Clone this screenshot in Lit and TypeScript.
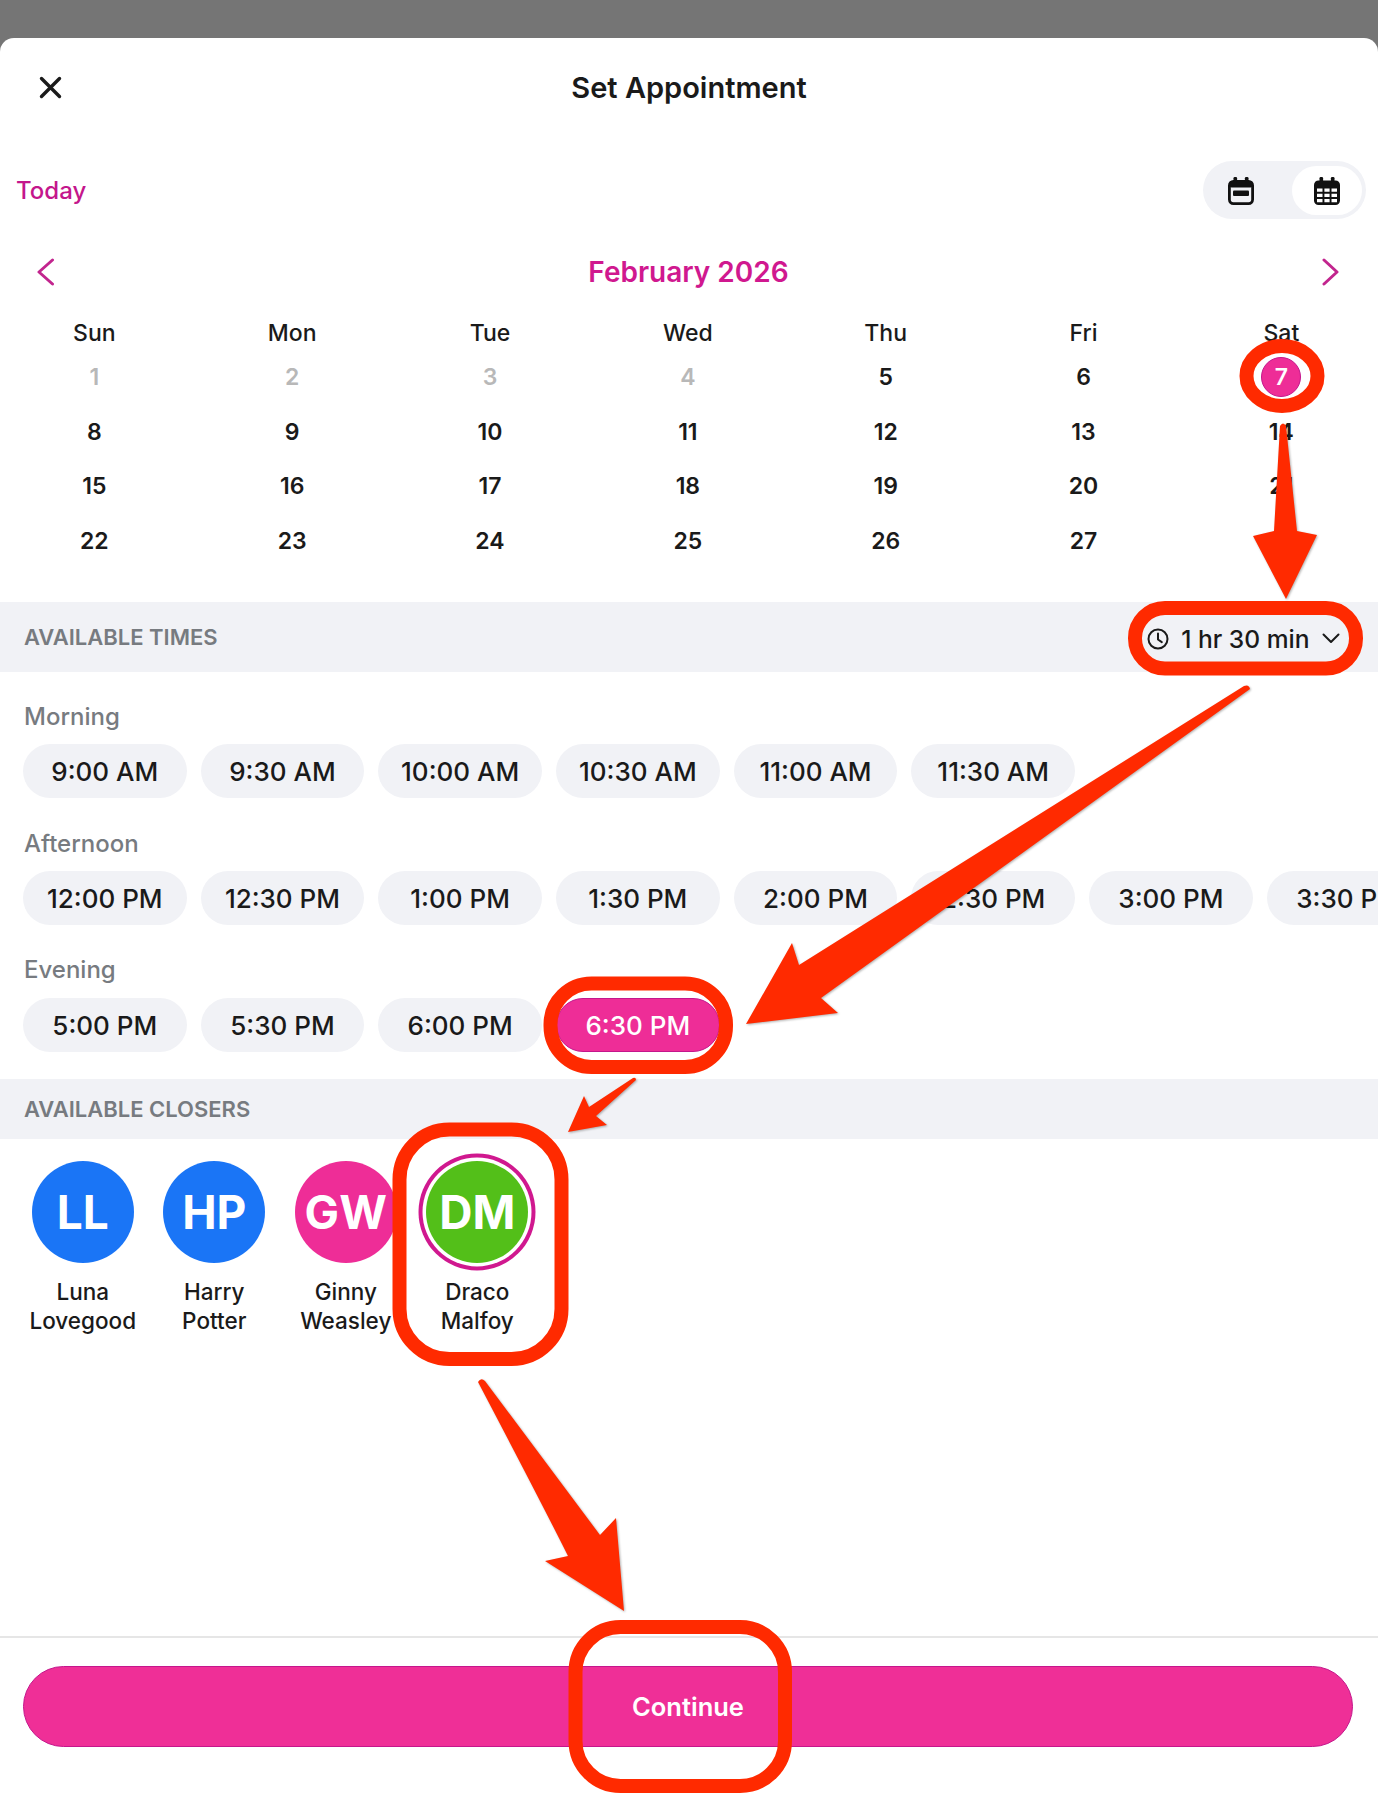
import { LitElement, html, css } from "lit";
import { customElement } from "lit/decorators.js";

const WEEKDAYS = ["Sun", "Mon", "Tue", "Wed", "Thu", "Fri", "Sat"];
const MORNING = ["9:00 AM", "9:30 AM", "10:00 AM", "10:30 AM", "11:00 AM", "11:30 AM"];
const AFTERNOON = ["12:00 PM", "12:30 PM", "1:00 PM", "1:30 PM", "2:00 PM", "2:30 PM", "3:00 PM", "3:30 PM"];
const EVENING = ["5:00 PM", "5:30 PM", "6:00 PM", "6:30 PM"];
const CLOSERS = [
  { initials: "LL", first: "Luna", last: "Lovegood", color: "blue" },
  { initials: "HP", first: "Harry", last: "Potter", color: "blue" },
  { initials: "GW", first: "Ginny", last: "Weasley", color: "pink" },
  { initials: "DM", first: "Draco", last: "Malfoy", color: "green" },
];

@customElement("app-root")
export class AppRoot extends LitElement {
  static styles = css`
    :host {
      display: block;
      position: relative;
      width: 1378px;
      height: 1802px;
      overflow: hidden;
      background: #757575;
      font-family: Inter, "Liberation Sans", sans-serif;
      color: #1a1a1a;
    }

    .sheet {
      margin-top: 38px;
      height: 1764px;
      display: flex;
      flex-direction: column;
      background: #fff;
      border-radius: 14px 14px 0 0;
    }

    .top {
      height: 98px;
      display: grid;
      grid-template-columns: 1fr auto 1fr;
      align-items: center;
    }
    .top svg {
      display: block;
      margin-left: 39px;
    }
    .title {
      font-size: 29px;
      font-weight: 600;
    }

    .toolbar {
      margin-top: 25px;
      display: flex;
      align-items: center;
      justify-content: space-between;
      padding: 0 12px 0 16px;
    }
    .today {
      padding-top: 1px;
      font-size: 24px;
      font-weight: 500;
      color: #c4168c;
    }
    .toggle {
      width: 163px;
      height: 58px;
      box-sizing: border-box;
      padding: 5px 4px 4px 0;
      display: grid;
      grid-template-columns: 1fr 70px;
      background: #f1f2f6;
      border-radius: 29px;
    }
    .toggle div {
      display: flex;
      align-items: center;
      justify-content: center;
      border-radius: 25px;
    }
    .toggle .off {
      padding-right: 14px;
    }
    .toggle .on {
      background: #fff;
    }

    .month {
      margin-top: 33px;
      height: 40px;
      display: flex;
      align-items: center;
      justify-content: space-between;
      padding: 0 39px 0 36px;
      font-size: 28px;
      font-weight: 600;
      color: #d0188f;
    }

    .calendar {
      margin: 24px 0 34px -4.6px;
      display: grid;
      grid-template-columns: repeat(7, 197.85px);
      grid-template-rows: 34px repeat(4, 54.6px);
      align-items: center;
      justify-items: center;
      font-size: 23px;
      font-weight: 600;
    }
    .weekday {
      font-weight: 500;
    }
    .muted {
      color: #b8b8b8;
    }
    .picked {
      width: 40px;
      height: 40px;
      display: flex;
      align-items: center;
      justify-content: center;
      border-radius: 50%;
      background: #ee2d97;
      color: #fff;
      box-sizing: border-box;
      border: 1px solid #c4168c;
    }

    .band {
      display: flex;
      align-items: center;
      justify-content: space-between;
      padding: 0 38.5px 0 24px;
      background: #f1f2f6;
      font-size: 22px;
      font-weight: 600;
      color: #777b80;
    }
    .band.times {
      height: 70px;
    }
    .band.closers {
      height: 60px;
      margin-top: 27px;
    }
    .duration {
      display: flex;
      align-items: center;
      padding-top: 3px;
      font-size: 24.6px;
      font-weight: 500;
      color: #1a1a1a;
    }
    .duration span {
      margin: 0 12px 0 12px;
    }

    .slots {
      margin-top: 30px;
    }
    .slots + .slots {
      margin-top: 31px;
    }
    .slots h3 {
      margin: 0 0 12px;
      padding-left: 24px;
      font-size: 24px;
      line-height: 30px;
      font-weight: 500;
      color: #777b80;
    }
    .slots.last {
      margin-top: 30px;
    }
    .slots.last h3 {
      margin-bottom: 13px;
    }
    .row {
      display: flex;
      gap: 14.2px;
      padding-left: 23px;
      overflow: hidden;
    }
    .pill {
      flex: none;
      width: 163.5px;
      height: 54px;
      box-sizing: border-box;
      padding-top: 1px;
      display: flex;
      align-items: center;
      justify-content: center;
      border-radius: 27px;
      background: #f1f2f6;
      font-size: 26px;
      font-weight: 500;
    }
    .pill.on {
      background: #ee2d97;
      border: 1.5px solid #c4168c;
      color: #fff;
    }

    .people {
      margin-top: 22px;
      padding-left: 17px;
      display: flex;
    }
    .person {
      flex: none;
      width: 131.5px;
      display: flex;
      flex-direction: column;
      align-items: center;
      font-size: 22.5px;
      line-height: 29px;
      font-weight: 500;
      text-align: center;
    }
    .avatar {
      width: 102px;
      height: 102px;
      margin-bottom: 14px;
      display: flex;
      align-items: center;
      justify-content: center;
      border-radius: 50%;
      color: #fff;
      font-size: 46px;
      font-weight: 700;
    }
    .avatar.blue {
      background: #1a75f6;
    }
    .avatar.pink {
      background: #ee2d97;
    }
    .avatar.green {
      background: #53bf19;
      box-shadow: 0 0 0 3.5px #fff, 0 0 0 7.5px #d0188f;
    }

    .footer {
      margin-top: auto;
      padding: 28px 25px 55px 23px;
      border-top: 2px solid #e6e6e6;
    }
    .continue {
      height: 81px;
      box-sizing: border-box;
      display: flex;
      align-items: center;
      justify-content: center;
      border: 1.5px solid #c4168c;
      border-radius: 41px;
      background: #ef2f97;
      color: #fff;
      font-size: 25.5px;
      font-weight: 600;
    }

    .marks {
      position: absolute;
      top: 0;
      left: 0;
      pointer-events: none;
    }
    .marks .ring {
      fill: none;
      stroke: #ff2a00;
      stroke-width: 14;
    }
    .marks .arrow {
      fill: #ff2a00;
      filter: drop-shadow(1px 1px 1px rgba(0, 0, 0, 0.3));
    }
  `;

  renderDays() {
    const cells = [];
    for (let d = 1; d <= 28; d++) {
      if (d === 7) {
        cells.push(html`<div class="picked">7</div>`);
      } else {
        cells.push(html`<div class=${d < 5 ? "muted" : ""}>${d}</div>`);
      }
    }
    return cells;
  }

  renderSlots(label: string, times: string[], picked = "", extra = "") {
    return html`
      <div class="slots ${extra}">
        <h3>${label}</h3>
        <div class="row">
          ${times.map((t) => html`<div class="pill ${t === picked ? "on" : ""}">${t}</div>`)}
        </div>
      </div>
    `;
  }

  render() {
    return html`
      <div class="sheet">
        <div class="top">
          <svg width="23" height="23" viewBox="0 0 23 23" fill="none" stroke="#1a1a1a" stroke-width="3.4" stroke-linecap="round">
            <path d="M2.5 2.5l18 18M20.5 2.5l-18 18" />
          </svg>
          <div class="title">Set Appointment</div>
        </div>

        <div class="toolbar">
          <div class="today">Today</div>
          <div class="toggle">
            <div class="off">
              <svg width="26" height="28" viewBox="0 0 26 28">
                <rect x="1.4" y="4.4" width="23.2" height="22.2" rx="4" fill="none" stroke="#111" stroke-width="2.8" />
                <rect x="1.5" y="4" width="23" height="6.5" rx="2" fill="#111" />
                <rect x="5.5" y="0" width="3.6" height="6" rx="1.2" fill="#111" />
                <rect x="16.9" y="0" width="3.6" height="6" rx="1.2" fill="#111" />
                <rect x="5" y="13.5" width="16" height="5.5" rx="1" fill="#111" />
              </svg>
            </div>
            <div class="on">
              <svg width="26" height="28" viewBox="0 0 26 28">
                <rect x="0" y="3.5" width="26" height="24.5" rx="4.5" fill="#111" />
                <rect x="5.5" y="0" width="3.6" height="6" rx="1.2" fill="#111" />
                <rect x="16.9" y="0" width="3.6" height="6" rx="1.2" fill="#111" />
                <path
                  fill="#fff"
                  d="M3 11.4h5.5v3.4H3zM10.4 11.4h5.2v3.4h-5.2zM17.5 11.4H23v3.4h-5.5zM3 16.8h5.5v3.2H3zM10.4 16.8h5.2v3.2h-5.2zM17.5 16.8H23v3.2h-5.5zM3 22h5.5v3.2H3zM10.4 22h5.2v3.2h-5.2zM17.5 22H23v3.2h-5.5z"
                />
              </svg>
            </div>
          </div>
        </div>

        <div class="month">
          <svg width="19" height="28" viewBox="0 0 19 28" fill="none" stroke="#c2258e" stroke-width="3" stroke-linecap="round" stroke-linejoin="round">
            <path d="M16.5 2L3 14l13.5 12" />
          </svg>
          <span>February 2026</span>
          <svg width="17" height="28" viewBox="0 0 17 28" fill="none" stroke="#c2258e" stroke-width="3" stroke-linecap="round" stroke-linejoin="round">
            <path d="M2 2l13 12L2 26" />
          </svg>
        </div>

        <div class="calendar">
          ${WEEKDAYS.map((d) => html`<div class="weekday">${d}</div>`)}
          ${this.renderDays()}
        </div>

        <div class="band times">
          <div>AVAILABLE TIMES</div>
          <div class="duration">
            <svg width="22" height="22" viewBox="0 0 22 22" fill="none" stroke="#1a1a1a" stroke-width="2" stroke-linecap="round" stroke-linejoin="round">
              <circle cx="11" cy="11" r="9.5" />
              <path d="M11 5.5V11.5l3.8 2.6" />
            </svg>
            <span>1 hr 30 min</span>
            <svg width="18" height="11" viewBox="0 0 18 11" fill="none" stroke="#1a1a1a" stroke-width="2" stroke-linecap="round" stroke-linejoin="round">
              <path d="M1.5 1.5L9 9l7.5-7.5" />
            </svg>
          </div>
        </div>

        ${this.renderSlots("Morning", MORNING)}
        ${this.renderSlots("Afternoon", AFTERNOON)}
        ${this.renderSlots("Evening", EVENING, "6:30 PM", "last")}

        <div class="band closers"><div>AVAILABLE CLOSERS</div></div>

        <div class="people">
          ${CLOSERS.map(
            (c) => html`
              <div class="person">
                <div class="avatar ${c.color}">${c.initials}</div>
                <div>${c.first}</div>
                <div>${c.last}</div>
              </div>
            `
          )}
        </div>

        <div class="footer">
          <div class="continue">Continue</div>
        </div>
      </div>

      <!-- red annotations drawn on top of the screenshot -->
      <svg class="marks" width="1378" height="1802" viewBox="0 0 1378 1802">
        <ellipse class="ring" cx="1282" cy="376" rx="35.5" ry="30" />
        <rect class="ring" x="1135" y="608" width="221" height="60.5" rx="30" />
        <rect class="ring" x="550.5" y="983.5" width="175.5" height="83.5" rx="41" />
        <rect class="ring" x="399.5" y="1129.5" width="162" height="229.5" rx="50" />
        <rect class="ring" x="575.5" y="1627" width="209.5" height="159" rx="45" />

        <path class="arrow" d="M1280 426q3-5 6 0L1297 531l20 4-31 64-33-63 21-5z" />
        <path class="arrow" d="M1244 686q5-2 6 3L821 998l17 15-92 11 46-81 7 22z" />
        <path class="arrow" d="M633 1078q3-1 3 2l-40 36 11 9-39 7 16-36 5 11z" />
        <path class="arrow" d="M478 1382q3-5 7-1L600 1535l16-17 8 93-79-50 23-5Q540 1500 478 1382z" />
      </svg>
    `;
  }
}
